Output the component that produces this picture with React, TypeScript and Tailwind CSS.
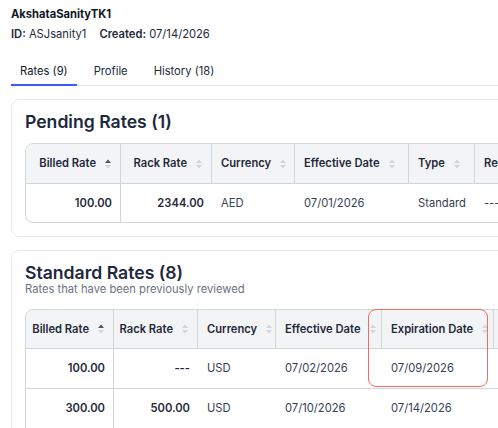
import React from 'react'

type Col = { label: string; width: string; numeric?: boolean; active?: boolean }

const SortIcon: React.FC<{ active?: boolean }> = ({ active }) => (
  <svg width="6" height="10" viewBox="0 0 6 10" className="shrink-0">
    <path d="M3 0.5 L6 4 L0 4 Z" fill={active ? '#4b5563' : '#d1d5db'} />
    <path d="M3 9.5 L6 6 L0 6 Z" fill="#d1d5db" />
  </svg>
)

const pendingCols: Col[] = [
  { label: 'Billed Rate', width: 'w-[95px]', numeric: true, active: true },
  { label: 'Rack Rate', width: 'w-[91px]', numeric: true },
  { label: 'Currency', width: 'w-[83px]' },
  { label: 'Effective Date', width: 'w-[114px]' },
  { label: 'Type', width: 'w-[66px]' },
  { label: 'Reason', width: 'w-[120px]' },
]

const standardCols: Col[] = [
  { label: 'Billed Rate', width: 'w-[88px]', numeric: true, active: true },
  { label: 'Rack Rate', width: 'w-[84px]', numeric: true },
  { label: 'Currency', width: 'w-[78px]' },
  { label: 'Effective Date', width: 'w-[106px]' },
  { label: 'Expiration Date', width: 'w-[112px]' },
  { label: 'Type', width: 'w-[90px]' },
]

const pendingRows = [['100.00', '2344.00', 'AED', '07/01/2026', 'Standard', '---']]

const standardRows = [
  ['100.00', '---', 'USD', '07/02/2026', '07/09/2026', 'Standard'],
  ['300.00', '500.00', 'USD', '07/10/2026', '07/14/2026', 'Standard'],
  ['250.00', '400.00', 'USD', '07/15/2026', '07/31/2026', 'Standard'],
]

const RateTable: React.FC<{ cols: Col[]; rows: string[][]; headH: string; rowH: string }> = ({
  cols,
  rows,
  headH,
  rowH,
}) => (
  <div className="border border-gray-300 rounded-lg overflow-hidden w-max">
    <div className={`flex bg-gray-100 border-b border-gray-300 ${headH}`}>
      {cols.map((c) => (
        <div
          key={c.label}
          className={`${c.width} shrink-0 flex items-center gap-[9px] border-r border-gray-300 text-[11.2px] font-semibold text-gray-800 whitespace-nowrap ${
            c.numeric ? 'justify-end pr-[9px]' : 'justify-start pl-[9px]'
          }`}
        >
          <span>{c.label}</span>
          <SortIcon active={c.active} />
        </div>
      ))}
    </div>
    {rows.map((r, i) => (
      <div key={i} className={`flex ${rowH} ${i < rows.length - 1 ? 'border-b border-gray-300' : ''}`}>
        {r.map((v, j) => (
          <div
            key={j}
            className={`${cols[j].width} shrink-0 flex items-center text-[11.2px] whitespace-nowrap ${
              cols[j].numeric ? 'justify-end pr-[8px] font-semibold text-gray-800' : 'justify-start pl-[9px] text-gray-700'
            } ${j === 0 ? 'border-r border-gray-300' : ''} ${j === 1 ? 'pr-[7px]' : ''} ${j === 2 ? 'pl-[6px]' : ''}`}
          >
            {v}
          </div>
        ))}
      </div>
    ))}
  </div>
)

export default function App() {
  return (
    <div className="relative w-[498px] h-[428px] overflow-hidden bg-white font-['Inter',sans-serif] text-gray-900">
      <div className="px-[11px] pt-[6px]">
        <h1 className="text-[11.2px] font-bold leading-[16px]">AkshataSanityTK1</h1>
        <div className="mt-[4px] text-[11.2px] leading-[16px] text-gray-800">
          <span className="font-semibold">ID:</span> ASJsanity1
          <span className="ml-[13px] font-semibold">Created:</span> 07/14/2026
        </div>
      </div>

      <div className="ml-[11px] mt-[21px] flex gap-2 border-b border-gray-200">
        <button className="-mb-px px-[9px] pb-[5px] border-b-2 border-[#3b5bf5] text-[11.2px] leading-[16px] text-gray-900">
          Rates (9)
        </button>
        <button className="-mb-px px-[9px] pb-[5px] border-b-2 border-transparent text-[11.2px] leading-[16px] text-gray-800">
          Profile
        </button>
        <button className="-mb-px px-[9px] pb-[5px] border-b-2 border-transparent text-[11.2px] leading-[16px] text-gray-800">
          History (18)
        </button>
      </div>

      <div className="ml-[11px] mt-[13px] w-[620px] border border-gray-200 rounded-lg px-[13px] pt-[12px] pb-[13px]">
        <h2 className="text-[17.6px] leading-[20px] font-semibold text-slate-800">Pending Rates (1)</h2>
        <div className="mt-[11px]">
          <RateTable cols={pendingCols} rows={pendingRows} headH="h-[40px]" rowH="h-[38px]" />
        </div>
      </div>

      <div className="ml-[11px] mt-[13px] w-[620px] border border-gray-200 rounded-lg px-[13px] pt-[12px] pb-[13px]">
        <h2 className="text-[17.6px] leading-[19px] font-semibold text-slate-800">Standard Rates (8)</h2>
        <p className="text-[11.2px] leading-[14px] text-gray-500">Rates that have been previously reviewed</p>
        <div className="mt-[13px]">
          <RateTable cols={standardCols} rows={standardRows} headH="h-[39px]" rowH="h-[40px]" />
        </div>
      </div>

      <div className="absolute left-[368px] top-[309px] w-[120px] h-[78px] border-[1.5px] border-[#f26b66] rounded-lg" />
    </div>
  )
}
